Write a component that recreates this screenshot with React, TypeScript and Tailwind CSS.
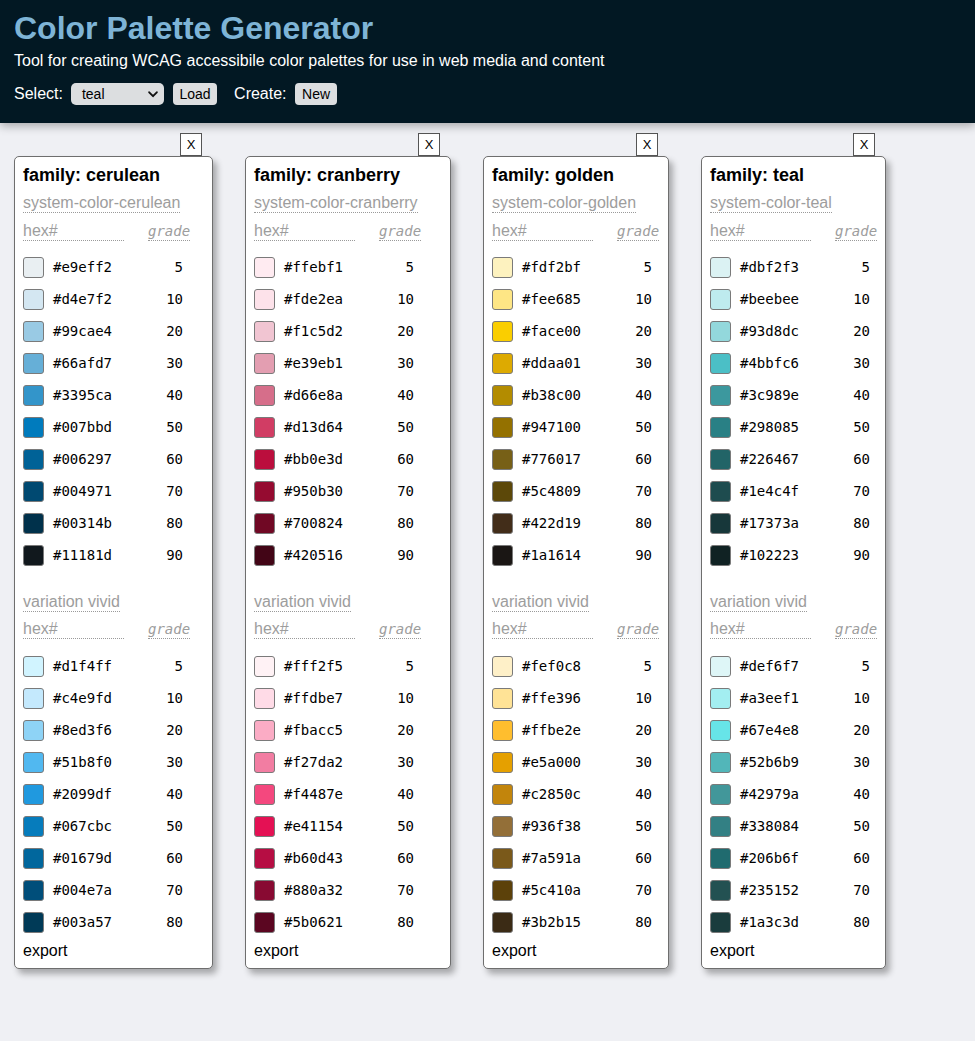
import React from "react";

type Fam = {
  name: string;
  w: string;
  base: [string, number][];
  vivid: [string, number][];
};

const g10 = [5, 10, 20, 30, 40, 50, 60, 70, 80, 90];
const mk = (hex: string[]): [string, number][] => hex.map((h, i) => [h, g10[i]]);

const families: Fam[] = [
  {
    name: "cerulean",
    w: "w-[199px]",
    base: mk(["#e9eff2", "#d4e7f2", "#99cae4", "#66afd7", "#3395ca", "#007bbd", "#006297", "#004971", "#00314b", "#11181d"]),
    vivid: mk(["#d1f4ff", "#c4e9fd", "#8ed3f6", "#51b8f0", "#2099df", "#067cbc", "#01679d", "#004e7a", "#003a57"]),
  },
  {
    name: "cranberry",
    w: "w-[206px]",
    base: mk(["#ffebf1", "#fde2ea", "#f1c5d2", "#e39eb1", "#d66e8a", "#d13d64", "#bb0e3d", "#950b30", "#700824", "#420516"]),
    vivid: mk(["#fff2f5", "#ffdbe7", "#fbacc5", "#f27da2", "#f4487e", "#e41154", "#b60d43", "#880a32", "#5b0621"]),
  },
  {
    name: "golden",
    w: "w-[186px]",
    base: mk(["#fdf2bf", "#fee685", "#face00", "#ddaa01", "#b38c00", "#947100", "#776017", "#5c4809", "#422d19", "#1a1614"]),
    vivid: mk(["#fef0c8", "#ffe396", "#ffbe2e", "#e5a000", "#c2850c", "#936f38", "#7a591a", "#5c410a", "#3b2b15"]),
  },
  {
    name: "teal",
    w: "w-[185px]",
    base: mk(["#dbf2f3", "#beebee", "#93d8dc", "#4bbfc6", "#3c989e", "#298085", "#226467", "#1e4c4f", "#17373a", "#102223"]),
    vivid: mk(["#def6f7", "#a3eef1", "#67e4e8", "#52b6b9", "#42979a", "#338084", "#206b6f", "#235152", "#1a3c3d"]),
  },
];

const sans = "font-['Liberation_Sans',Arial,sans-serif]";
const mono = "font-['DejaVu_Sans_Mono',monospace]";

function Label({ text }: { text: string }) {
  return (
    <div className="flex">
      <span className="block border-b border-dotted border-[#9a9a9a] text-[16px] leading-[18px] text-[#9d9d9d]">
        {text}
      </span>
    </div>
  );
}

function Header() {
  return (
    <div className="flex items-start">
      <span className="block w-[101px] border-b border-dotted border-[#9a9a9a] text-[16px] leading-[18px] text-[#9d9d9d]">
        hex#
      </span>
      <span
        className={`${mono} ml-[24px] block border-b border-dotted border-[#9a9a9a] pt-[1px] text-[14px] italic leading-[17px] text-[#9d9d9d]`}
      >
        grade
      </span>
    </div>
  );
}

function Rows({ rows }: { rows: [string, number][] }) {
  return (
    <div className="flex flex-col">
      {rows.map(([hex, grade]) => (
        <div key={hex} className="flex h-[32px] w-[160px] items-center">
          <div
            className="h-[21px] w-[21px] rounded-[3px] border border-[#7a7a7a]"
            style={{ backgroundColor: hex }}
          />
          <span className={`${mono} ml-[9px] text-[14px] text-black`}>{hex}</span>
          <span className={`${mono} ml-auto text-[14px] text-black`}>{grade}</span>
        </div>
      ))}
    </div>
  );
}

function Card({ f }: { f: Fam }) {
  return (
    <div className="flex flex-col items-end">
      <button className={`${sans} mr-[11px] flex h-[23px] w-[22px] items-center justify-center border border-[#555] bg-white text-[13px] leading-none text-black`}>
        X
      </button>
      <div
        className={`${f.w} flex flex-col rounded-[5px] border border-[#6e6e6e] bg-white pb-[8px] pl-2 pt-2 shadow-[4px_5px_6px_rgba(0,0,0,0.3)]`}
      >
        <div className="text-[18px] font-bold leading-[21px] text-black">family: {f.name}</div>
        <div className="mt-[8px]">
          <Label text={`system-color-${f.name}`} />
        </div>
        <div className="mt-[9px]">
          <Header />
        </div>
        <div className="mt-[10px]">
          <Rows rows={f.base} />
        </div>
        <div className="mt-[22px]">
          <Label text="variation vivid" />
        </div>
        <div className="mt-[8px]">
          <Header />
        </div>
        <div className="mt-[11px]">
          <Rows rows={f.vivid} />
        </div>
        <div className="mt-[4px] text-[16px] leading-[18px] text-black">export</div>
      </div>
    </div>
  );
}

export default function App() {
  return (
    <div className={`${sans} min-h-screen bg-[#eff0f4]`}>
      <header className="relative z-10 bg-[#021823] px-[14px] pb-[18px] pt-[11px] shadow-[0_3px_9px_rgba(0,0,0,0.3)]">
        <h1 className="text-[32px] font-bold leading-[34px] text-[#7eb4d6]">Color Palette Generator</h1>
        <p className="mt-[7px] text-[16px] leading-[18px] text-white">
          Tool for creating WCAG accessibile color palettes for use in web media and content
        </p>
        <div className="mt-[13px] flex h-[22px] items-center text-[16px] text-white">
          <span>Select:</span>
          <div className="ml-[8px] flex h-[22px] w-[93px] items-center justify-between rounded-[5px] bg-[#dcdee0] pl-[11px] pr-[5px] text-[14px] text-black">
            <span>teal</span>
            <svg width="10" height="7" viewBox="0 0 10 7" className="mr-[1px]">
              <path d="M1.2 1.3 L5 5.2 L8.8 1.3" fill="none" stroke="#111" strokeWidth="1.9" strokeLinecap="round" strokeLinejoin="round" />
            </svg>
          </div>
          <button className="ml-[9px] h-[22px] rounded-[4px] bg-[#dcdee0] px-[6.5px] text-[14px] text-black">Load</button>
          <span className="ml-[17px]">Create:</span>
          <button className="ml-[8.5px] h-[22px] rounded-[4px] bg-[#dcdee0] px-[7px] text-[14px] text-black">New</button>
        </div>
      </header>
      <main className="flex items-start gap-[32px] pl-[14px] pt-[10px]">
        {families.map((f) => (
          <Card key={f.name} f={f} />
        ))}
      </main>
    </div>
  );
}
